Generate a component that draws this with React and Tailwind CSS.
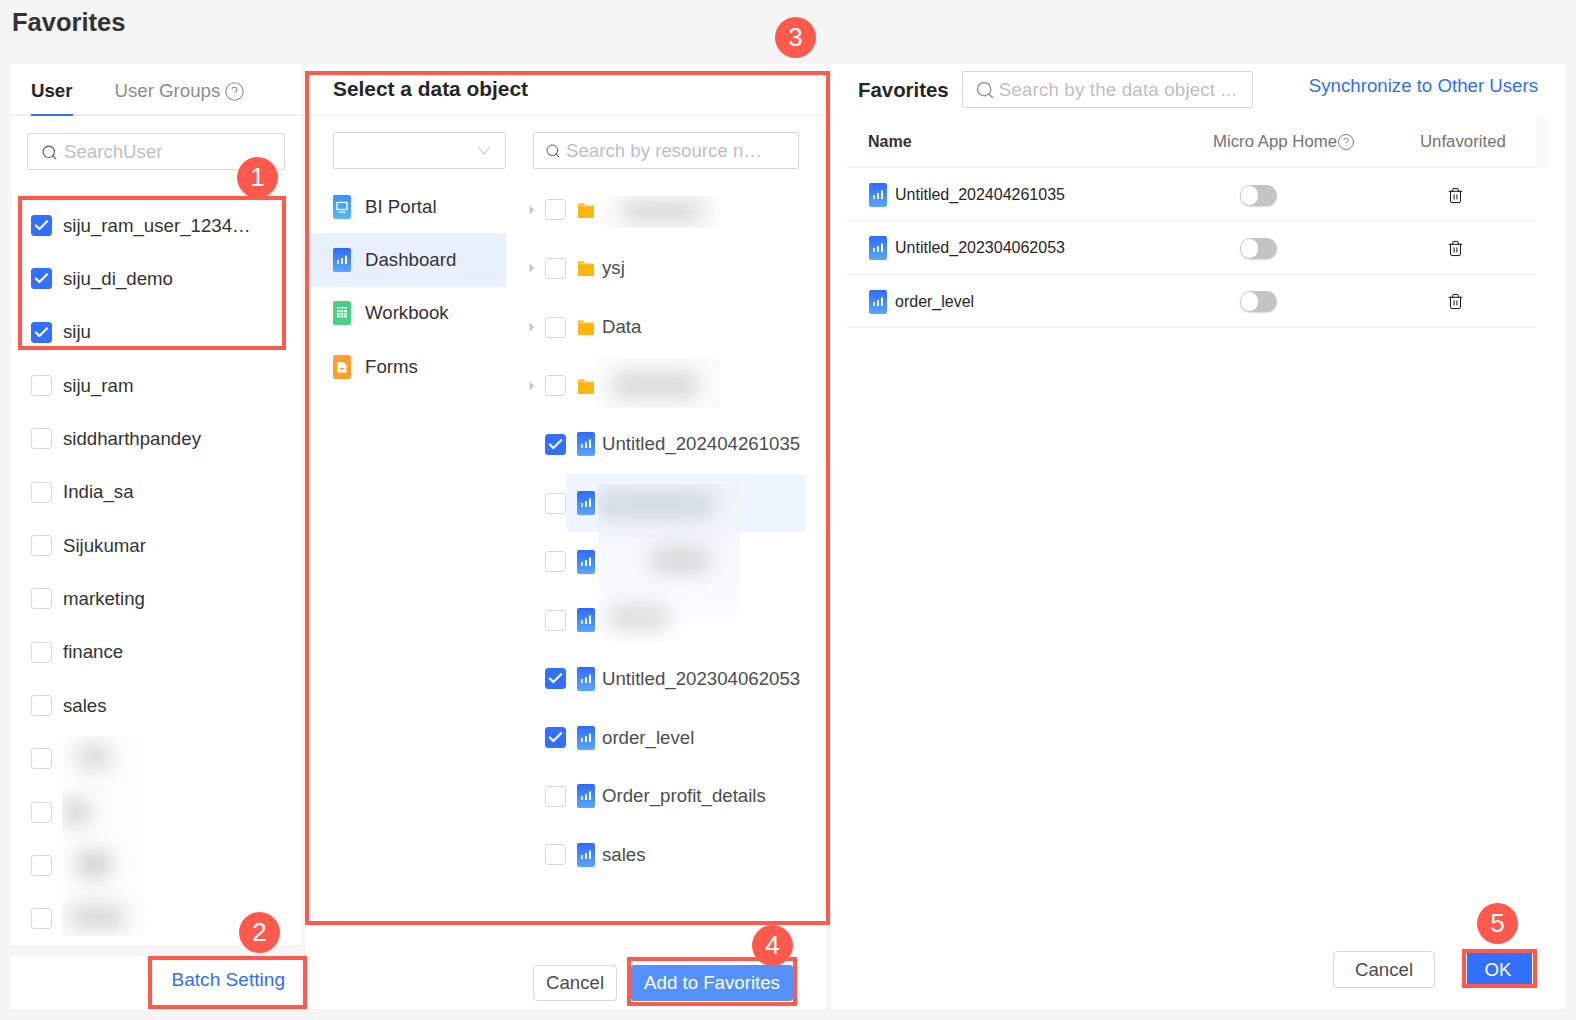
import React from 'react';
import { Search, Check, CircleHelp, Trash2 } from 'lucide-react';

const users = [
  { name: 'siju_ram_user_1234…', on: true },
  { name: 'siju_di_demo', on: true },
  { name: 'siju', on: true },
  { name: 'siju_ram' },
  { name: 'siddharthpandey' },
  { name: 'India_sa' },
  { name: 'Sijukumar' },
  { name: 'marketing' },
  { name: 'finance' },
  { name: 'sales' },
  { name: '' },
  { name: '' },
  { name: '' },
  { name: '' },
];

const tree = [
  { type: 'folder', name: '' },
  { type: 'folder', name: 'ysj' },
  { type: 'folder', name: 'Data' },
  { type: 'folder', name: '' },
  { type: 'dash', name: 'Untitled_202404261035', on: true },
  { type: 'dash', name: '', hover: true },
  { type: 'dash', name: '' },
  { type: 'dash', name: '' },
  { type: 'dash', name: 'Untitled_202304062053', on: true },
  { type: 'dash', name: 'order_level', on: true },
  { type: 'dash', name: 'Order_profit_details' },
  { type: 'dash', name: 'sales' },
];

const favorites = ['Untitled_202404261035', 'Untitled_202304062053', 'order_level'];

const Checkbox = ({ on }) => (
  <span
    className={`flex w-[21px] h-[21px] shrink-0 items-center justify-center rounded-[3px] border ${
      on ? 'bg-[#3370ff] border-[#3370ff]' : 'bg-white border-[#d9d9d9]'
    }`}
  >
    {on && <Check className="w-[17px] h-[17px] text-white" strokeWidth={3} />}
  </span>
);

const DashIcon = () => (
  <svg width="18" height="24" viewBox="0 0 18 24" className="shrink-0">
    <defs>
      <linearGradient id="dashGrad" x1="0" y1="0" x2="0" y2="1">
        <stop offset="0" stopColor="#2f6bfa" />
        <stop offset="1" stopColor="#5aa7ff" />
      </linearGradient>
    </defs>
    <rect width="18" height="24" rx="2" fill="url(#dashGrad)" />
    <rect x="4" y="12" width="2" height="4" fill="#fff" opacity="0.8" />
    <rect x="8" y="10" width="2" height="6" fill="#fff" opacity="0.9" />
    <rect x="12" y="7.500" width="2" height="8.500" fill="#fff" />
  </svg>
);

const PortalIcon = () => (
  <svg width="18" height="24" viewBox="0 0 18 24" className="shrink-0">
    <defs>
      <linearGradient id="portalGrad" x1="0" y1="0" x2="0" y2="1">
        <stop offset="0" stopColor="#3b94fb" />
        <stop offset="1" stopColor="#5ab4ff" />
      </linearGradient>
    </defs>
    <rect width="18" height="24" rx="2" fill="url(#portalGrad)" />
    <rect x="4" y="7.500" width="10" height="7" fill="none" stroke="#fff" strokeWidth="1.300" />
    <rect x="5.500" y="16.500" width="7" height="1.200" fill="#fff" />
  </svg>
);

const WorkbookIcon = () => (
  <svg width="18" height="24" viewBox="0 0 18 24" className="shrink-0">
    <rect width="18" height="24" rx="2" fill="#4bd083" />
    <rect x="4" y="6" width="10" height="1.400" fill="#fff" />
    <rect x="4" y="9" width="10" height="7.500" fill="#fff" />
    <path d="M7.300 9v7.500M10.600 9v7.500M4 11.500h10M4 14h10" stroke="#4bd083" strokeWidth="0.800" />
  </svg>
);

const FormIcon = () => (
  <svg width="18" height="24" viewBox="0 0 18 24" className="shrink-0">
    <rect width="18" height="24" rx="2" fill="#ff9f2e" />
    <path d="M4.500 7h6l3 3v7.500h-9z" fill="#fff" />
    <rect x="6.500" y="13" width="5" height="1.300" fill="#ff9f2e" />
  </svg>
);

const FolderIcon = () => (
  <svg width="16" height="16" viewBox="0 0 16 16" className="shrink-0">
    <path d="M0 2.500a1 1 0 0 1 1-1h4.500l1.500 2h8a1 1 0 0 1 1 1V15a1 1 0 0 1-1 1H1a1 1 0 0 1-1-1z" fill="#ffb50f" />
    <rect x="1" y="3.200" width="14" height="1" fill="#ffe29a" />
  </svg>
);

const Caret = () => (
  <svg width="6" height="10" viewBox="0 0 6 10" className="shrink-0">
    <path d="M0.500 0.500 5.500 5 0.500 9.500z" fill="#c8c8c8" />
  </svg>
);

const SearchBox = ({ placeholder, className, iconClass = 'w-[17px] h-[17px] text-[#555]', gap = 'ml-[6px]' }) => (
  <div className={`flex items-center border border-[#d9d9d9] rounded-[2px] bg-white ${className}`}>
    <Search className={`shrink-0 ${iconClass}`} strokeWidth={1.500} />
    <span className={`${gap} whitespace-nowrap text-[18.67px] text-[#bfbfbf]`}>{placeholder}</span>
  </div>
);

const Toggle = () => (
  <span className="flex w-[37px] h-[21px] items-center rounded-full bg-[#c4c4c4] shadow-[0_1px_2px_rgba(0,0,0,0.15)]">
    <span className="ml-[1px] w-[17px] h-[19px] rounded-full bg-white" />
  </span>
);

// numbered callouts that sit on top of the screenshot
const Badge = ({ n, className }) => (
  <div
    className={`absolute flex w-[41px] h-[41px] items-center justify-center rounded-full bg-[#ff5a4d] text-[26px] font-medium text-white ${className}`}
  >
    {n}
  </div>
);

const Smudge = ({ className, children }) => (
  <div className={`absolute overflow-hidden ${className}`}>{children}</div>
);

const App = () => {
  return (
    <div className="relative w-[1576px] h-[1020px] overflow-hidden bg-[#f5f5f5] text-[#333] [font-family:'Liberation_Sans',Arial,sans-serif]">
      <div className="h-[64px] pl-[12px] pt-[6px] text-[25.5px] leading-[33px] font-semibold">Favorites</div>

      <div className="flex h-[945px] pl-[11px]">
        {/* users */}
        <div className="flex flex-col w-[290px] shrink-0">
          <div className="h-[881px] bg-white overflow-hidden">
            <div className="flex h-[52px] items-stretch px-[20px] border-b-2 border-[#eeeeee]">
              <div className="flex items-center h-[52px] pt-[4px] border-b-2 border-[#3370ff] text-[18.67px] font-semibold text-[#262626]">
                User
              </div>
              <div className="flex items-center ml-[42px] pt-[4px] text-[18.67px] text-[#8c8c8c]">
                User Groups
                <CircleHelp className="ml-[4px] w-[21px] h-[21px]" strokeWidth={1.200} />
              </div>
            </div>
            <SearchBox placeholder="SearchUser" className="mt-[17px] ml-[16px] w-[258px] h-[37px] pl-[13px] pt-[1px]" />
            <div className="mt-[29px]">
              {users.map((u, i) => (
                <div key={i} className="flex h-[53.33px] items-center pl-[20px] text-[18.67px]">
                  <Checkbox on={u.on} />
                  <span className="ml-[11px]">{u.name}</span>
                </div>
              ))}
            </div>
          </div>
          <div className="flex mt-[11px] h-[53px] items-center justify-end pr-[16px] pb-[4px] bg-white text-[19.1px] text-[#2f6ff5]">
            Batch Setting
          </div>
        </div>

        {/* data objects */}
        <div className="flex flex-col ml-[4px] w-[521px] shrink-0 bg-white rounded-[2px]">
          <div className="flex h-[52px] items-center pl-[28px] pb-[1px] border-b border-[#eeeeee] text-[20.9px] font-semibold text-[#262626]">
            Select a data object
          </div>
          <div className="flex">
            <div className="w-[201px] shrink-0">
              <div className="flex mt-[16px] ml-[28px] w-[173px] h-[37px] items-center justify-end pr-[14px] border border-[#d9d9d9] rounded-[2px]">
                <svg width="14" height="9" viewBox="0 0 14 9">
                  <path d="M1 1l6 7 6-7" fill="none" stroke="#bbb" strokeWidth="1" />
                </svg>
              </div>
              <div className="mt-[11px] text-[18.67px]">
                <div className="flex h-[53.33px] items-center pl-[28px]">
                  <PortalIcon />
                  <span className="ml-[14px]">BI Portal</span>
                </div>
                <div className="flex h-[53.33px] items-center pl-[28px] bg-[#e8f0fe]">
                  <DashIcon />
                  <span className="ml-[14px]">Dashboard</span>
                </div>
                <div className="flex h-[53.33px] items-center pl-[28px]">
                  <WorkbookIcon />
                  <span className="ml-[14px]">Workbook</span>
                </div>
                <div className="flex h-[53.33px] items-center pl-[28px]">
                  <FormIcon />
                  <span className="ml-[14px]">Forms</span>
                </div>
              </div>
            </div>
            <div className="flex-1 pl-[23px]">
              <SearchBox
                placeholder="Search by resource n…"
                className="mt-[16px] ml-[4px] w-[266px] h-[37px] pl-[11px]"
                iconClass="w-[16px] h-[16px] text-[#555]"
                gap="ml-[5px]"
              />
              <div className="mt-[11.400px] text-[18.67px] text-[#4d4d4d]">
                {tree.map((row, i) => (
                  <div key={i} className="flex h-[58.67px] items-center">
                    {row.type === 'folder' ? <Caret /> : <span className="w-[6px] shrink-0" />}
                    <span className="ml-[10px]">
                      <Checkbox on={row.on} />
                    </span>
                    <div
                      className={`flex h-full items-center w-[240px] ${
                        row.hover ? 'bg-[#eef5fe] rounded-[3px]' : ''
                      }`}
                    >
                      <span className="flex w-[11px] shrink-0" />
                      <span className="flex w-[18px] shrink-0 justify-center">
                        {row.type === 'folder' ? <FolderIcon /> : <DashIcon />}
                      </span>
                      <span className="ml-[7px] whitespace-nowrap">{row.name}</span>
                    </div>
                  </div>
                ))}
              </div>
            </div>
          </div>
          <div className="flex mt-auto pb-[8px] pr-[33px] justify-end gap-[14px] text-[18.67px]">
            <button className="w-[84px] h-[36px] rounded-[4px] border border-[#d9d9d9] bg-white text-[#4d4d4d]">Cancel</button>
            <button className="w-[162px] h-[36px] rounded-[3px] bg-[#5591fb] text-white">Add to Favorites</button>
          </div>
        </div>

        {/* favorites */}
        <div className="flex flex-col ml-[5px] w-[734px] shrink-0 bg-white rounded-[2px]">
          <div className="flex h-[51px] items-start">
            <div className="ml-[27px] mt-[12px] text-[20.4px] leading-[28px] font-semibold text-[#262626]">Favorites</div>
            <SearchBox
              placeholder="Search by the data object ..."
              className="mt-[7px] ml-[13px] w-[291px] h-[37px] pl-[12px]"
              iconClass="w-[20px] h-[20px] text-[#8a8a8a]"
              gap="ml-[4px] tracking-[0.2px]"
            />
            <div className="ml-auto mr-[27px] mt-[10px] text-[18.67px] leading-[24px] text-[#2f6ff5]">
              Synchronize to Other Users
            </div>
          </div>
          <div className="flex ml-[16px]">
            <div className="grid w-[689px] grid-cols-[366px_207px_116px] h-[53px] pt-[2px] items-center border-b border-[#eeeeee] text-[16px]">
              <div className="pl-[21px] font-semibold text-[#333]">Name</div>
              <div className="flex items-center text-[16.8px] text-[#737373]">
                Micro App Home
                <CircleHelp className="w-[18px] h-[18px]" strokeWidth={1.200} />
              </div>
              <div className="text-[16.8px] text-[#737373]">Unfavorited</div>
            </div>
            <div className="w-[13px] h-[53px] bg-[#fafafa]" />
          </div>
          <div className="ml-[16px] w-[689px] text-[16px] text-[#262626]">
            {favorites.map((name) => (
              <div key={name} className="grid grid-cols-[366px_207px_116px] h-[53.33px] pt-[2px] items-center border-b border-[#eeeeee]">
                <div className="flex items-center pl-[22px]">
                  <DashIcon />
                  <span className="ml-[8px]">{name}</span>
                </div>
                <div className="pl-[27px]">
                  <Toggle />
                </div>
                <div className="pl-[27px]">
                  <Trash2 className="w-[17px] h-[17px] text-black" strokeWidth={1.300} />
                </div>
              </div>
            ))}
          </div>
          <div className="flex mt-auto pb-[21px] pr-[33px] justify-end items-center gap-[32px] text-[18.67px]">
            <button className="w-[102px] h-[37px] rounded-[4px] border border-[#d9d9d9] bg-white text-[#4d4d4d]">Cancel</button>
            <button className="w-[65px] h-[34px] pr-[3px] bg-[#3370ff] text-white">OK</button>
          </div>
        </div>
      </div>

      {/* blurred-out names */}
      <Smudge className="left-[62px] top-[736px] w-[84px] h-[200px] bg-[#fdfdfd]">
        <div className="absolute left-[14px] top-[8px] w-[36px] h-[26px] rounded-full bg-[#d8d8d8] blur-[10px]" />
        <div className="absolute left-[0px] top-[62px] w-[30px] h-[28px] rounded-full bg-[#d4d4d4] blur-[10px]" />
        <div className="absolute left-[14px] top-[114px] w-[36px] h-[28px] rounded-full bg-[#d0d0d0] blur-[10px]" />
        <div className="absolute left-[6px] top-[168px] w-[58px] h-[26px] rounded-full bg-[#d8d8d8] blur-[10px]" />
      </Smudge>
      <Smudge className="left-[602px] top-[196px] w-[118px] h-[32px] bg-[#fcfcfc]">
        <div className="absolute left-[18px] top-[4px] w-[84px] h-[22px] rounded-full bg-[#d8d8d8] blur-[10px]" />
      </Smudge>
      <Smudge className="left-[596px] top-[358px] w-[124px] h-[50px] bg-[#fcfcfc]">
        <div className="absolute left-[14px] top-[14px] w-[90px] h-[26px] rounded-full bg-[#d8d8d8] blur-[10px]" />
      </Smudge>
      <Smudge className="left-[598px] top-[484px] w-[142px] h-[160px] bg-gradient-to-b from-[#eef3fb] to-[#ffffff]">
        <div className="absolute left-[-4px] top-[6px] w-[122px] h-[30px] rounded-full bg-[#d2d9e4] blur-[10px]" />
        <div className="absolute left-[52px] top-[62px] w-[60px] h-[28px] rounded-full bg-[#d8d8d8] blur-[10px]" />
        <div className="absolute left-[8px] top-[120px] w-[64px] h-[26px] rounded-full bg-[#dcdcdc] blur-[10px]" />
      </Smudge>

      {/* red annotation frames */}
      <div className="absolute left-[18px] top-[196px] w-[268px] h-[154px] border-[4px] border-[#ff5a4d]" />
      <div className="absolute left-[148px] top-[956px] w-[159px] h-[53px] border-[4px] border-[#ff5a4d]" />
      <div className="absolute left-[305px] top-[71px] w-[525px] h-[854px] border-[4px] border-[#ff5a4d]" />
      <div className="absolute left-[627px] top-[957px] w-[170px] h-[49px] border-[4px] border-[#ff5a4d]" />
      <div className="absolute left-[1462px] top-[949px] w-[75px] h-[39px] border-[4px] border-[#ff5a4d]" />

      <Badge n="1" className="left-[237px] top-[157px]" />
      <Badge n="2" className="left-[239px] top-[912px]" />
      <Badge n="3" className="left-[775px] top-[17px]" />
      <Badge n="4" className="left-[752px] top-[925px]" />
      <Badge n="5" className="left-[1477px] top-[903px]" />
    </div>
  );
};

export default App;
